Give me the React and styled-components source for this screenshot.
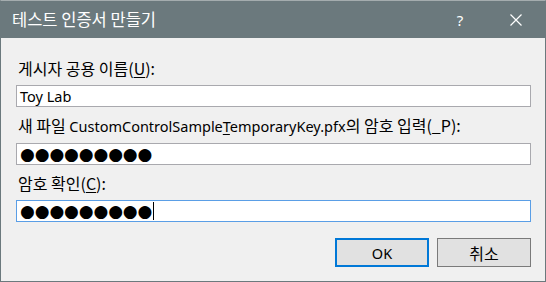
import React from 'react';
import styled, { createGlobalStyle } from 'styled-components';

const GlobalStyle = createGlobalStyle`
  html, body {
    margin: 0;
    padding: 0;
    background: #f0f0f0;
  }
  body {
    font-family: "Noto Sans CJK KR", "Noto Sans", sans-serif;
  }
`;

const Window = styled.div`
  width: 546px;
  height: 282px;
  box-sizing: border-box;
  display: flex;
  flex-direction: column;
  background: #f0f0f0;
  border: 1px solid #6b797d;
  border-top-color: #a4acae;
`;

const TitleBar = styled.div`
  height: 37px;
  flex-shrink: 0;
  display: flex;
  align-items: center;
  background: #6b797d;
  color: #ffffff;
  padding-left: 11px;
`;

const Title = styled.div`
  flex: 1;
  font-size: 16.5px;
  line-height: 20px;
  padding-bottom: 1px;
`;

const CaptionButton = styled.div`
  width: ${(p) => p.$w}px;
  height: 37px;
  display: flex;
  align-items: center;
  justify-content: center;
  color: #ffffff;
  font-family: "Noto Sans", sans-serif;
  font-size: 15px;
`;

const Client = styled.div`
  flex: 1;
  display: flex;
  flex-direction: column;
  padding: 20px 14px 0 15px;
  gap: 8px;
`;

const Field = styled.div`
  display: flex;
  flex-direction: column;
  gap: 7px;
`;

const Label = styled.div`
  font-size: 16px;
  line-height: 20px;
  color: #000000;
  padding-left: 2px;
  white-space: nowrap;
`;

/* Latin runs: Segoe UI is narrower than the CJK font's Latin glyphs */
const Lat = styled.span`
  font-family: "Noto Sans", sans-serif;
  font-size: 14.5px;
`;

const Key = styled.span`
  text-decoration: underline;
  text-underline-offset: 2px;
`;

const Input = styled.div`
  height: 22px;
  box-sizing: border-box;
  background: #ffffff;
  border: 1px solid ${(p) => (p.$focused ? '#5a9ee6' : '#a9a9ae')};
  display: flex;
  align-items: center;
  padding-left: 3px;
  font-size: 16px;
  color: #000000;
`;

const Dot = styled.span`
  display: inline-block;
  width: 14.7px;
  text-align: center;
  font-family: "DejaVu Sans", sans-serif;
  font-size: 17px;
  line-height: 20px;
`;

const Caret = styled.span`
  display: inline-block;
  width: 1px;
  height: 18px;
  background: #000000;
  margin-left: 1px;
`;

const ButtonRow = styled.div`
  display: flex;
  justify-content: flex-end;
  gap: 8px;
  margin-top: 8px;
`;

const Button = styled.div`
  width: 94px;
  height: 29px;
  box-sizing: border-box;
  background: #e1e1e1;
  border: ${(p) => (p.$default ? '2px solid #0078d7' : '1px solid #7a7a7a')};
  display: flex;
  align-items: center;
  justify-content: center;
  font-size: 16px;
  color: #000000;
`;

const Dots = ({ count }) => (
  <>
    {Array.from({ length: count }).map((_, i) => (
      <Dot key={i}>●</Dot>
    ))}
  </>
);

const CloseIcon = () => (
  <svg width="12" height="12" viewBox="0 0 12 12">
    <path d="M0.5 0.5 L11.5 11.5 M11.5 0.5 L0.5 11.5" stroke="#ffffff" strokeWidth="1.2" fill="none" />
  </svg>
);

const App = () => (
  <>
    <GlobalStyle />
    <Window>
      <TitleBar>
        <Title>테스트 인증서 만들기</Title>
        <CaptionButton $w={54}>?</CaptionButton>
        <CaptionButton $w={58}>
          <CloseIcon />
        </CaptionButton>
      </TitleBar>
      <Client>
        <Field>
          <Label>
            게시자 공용 이름(<Key>U</Key>):
          </Label>
          <Input>
            <Lat>Toy Lab</Lat>
          </Input>
        </Field>
        <Field>
          <Label>
            새 파일 <Lat>CustomControlSample<Key>T</Key>emporaryKey.pfx</Lat>의 암호 입력(_P):
          </Label>
          <Input>
            <Dots count={9} />
          </Input>
        </Field>
        <Field>
          <Label>
            암호 확인(<Key>C</Key>):
          </Label>
          <Input $focused>
            <Dots count={9} />
            <Caret />
          </Input>
        </Field>
        <ButtonRow>
          <Button $default>
            <Lat>OK</Lat>
          </Button>
          <Button>취소</Button>
        </ButtonRow>
      </Client>
    </Window>
  </>
);

export default App;
